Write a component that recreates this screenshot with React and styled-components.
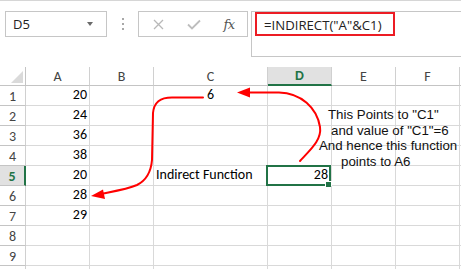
import React from "react";
import styled, { createGlobalStyle } from "styled-components";

const Global = createGlobalStyle`
  html, body { margin: 0; padding: 0; background: #fff; }
  body { width: 461px; height: 269px; overflow: hidden; }
  * { box-sizing: border-box; }
`;

const Page = styled.div`
  position: relative;
  width: 461px;
  height: 269px;
  overflow: hidden;
  background: #fff;
`;

const FormulaBar = styled.div`
  display: flex;
  align-items: flex-start;
  height: 67px;
  border-top: 1px solid #d6d6d6;
  padding-top: 10px;
  padding-left: 5px;
  width: 520px;
`;

const NameBox = styled.div`
  position: relative;
  display: flex;
  align-items: center;
  width: 102px;
  height: 26px;
  border: 1px solid #c6c6c6;
  padding-left: 7px;
  font-family: "Open Sans", "Noto Sans", sans-serif;
  font-size: 13px;
  color: #222;
`;

const DropArrow = styled.span`
  position: absolute;
  right: 13px;
  top: 10px;
  width: 0;
  height: 0;
  border-left: 3.5px solid transparent;
  border-right: 3.5px solid transparent;
  border-top: 4px solid #6a6a6a;
`;

const Separator = styled.div`
  width: 31px;
  height: 26px;
  display: flex;
  flex-direction: column;
  align-items: center;
  justify-content: center;
  gap: 3px;
`;

const Dot = styled.span`
  width: 2px;
  height: 2px;
  background: #a8a8a8;
`;

const ButtonsBox = styled.div`
  display: flex;
  align-items: center;
  width: 110px;
  height: 26px;
  border: 1px solid #c6c6c6;
`;

const BarButton = styled.span`
  width: ${(p) => p.$w}px;
  display: flex;
  justify-content: center;
  align-items: center;
`;

const Fx = styled.span`
  font-family: "DejaVu Serif", "Liberation Serif", serif;
  font-style: italic;
  font-size: 13px;
  color: #555;
  letter-spacing: -0.5px;
`;

const FormulaInput = styled.div`
  position: relative;
  margin-left: 3px;
  flex: 1;
  height: 46px;
  border: 1px solid #c6c6c6;
  font-family: "Open Sans", "Noto Sans", sans-serif;
  font-size: 13.2px;
  color: #222;
  padding: 4px 0 0 12px;
  line-height: 18px;
`;

const Highlight = styled.div`
  position: absolute;
  left: 3px;
  top: 0;
  width: 140px;
  height: 24px;
  border: 2px solid #ec1c24;
`;

const Grid = styled.div`
  display: grid;
  grid-template-columns: 26px 64px 64px 114px 64px 64px 64px 64px;
  grid-template-rows: 19px;
  grid-auto-rows: 20px;
  width: 520px;
`;

const HeaderCell = styled.div`
  position: relative;
  display: flex;
  align-items: center;
  justify-content: center;
  border-right: 1px solid ${(p) => (p.$rowSel ? "#217346" : "#d0d0d0")};
  border-bottom: 1px solid ${(p) => (p.$colSel ? "#217346" : "#c4c4c4")};
  ${(p) => (p.$rowSel ? "border-right-width: 2px;" : "")}
  ${(p) => (p.$colSel ? "border-bottom-width: 2px;" : "")}
  background: ${(p) => (p.$colSel || p.$rowSel ? "#e1e1e1" : "#fff")};
  font-family: Calibri, Carlito, Lato, sans-serif;
  font-size: 14px;
  font-weight: ${(p) => (p.$colSel || p.$rowSel ? 700 : 400)};
  color: ${(p) => (p.$colSel || p.$rowSel ? "#217346" : "#444")};
  padding-top: ${(p) => (p.$row ? 1 : 0)}px;
`;

const Corner = styled.div`
  position: relative;
  border-right: 1px solid #c4c4c4;
  border-bottom: 1px solid #c4c4c4;
`;

const CornerTriangle = styled.svg`
  position: absolute;
  right: 2px;
  bottom: 2px;
`;

const Cell = styled.div`
  position: relative;
  display: flex;
  align-items: flex-end;
  justify-content: ${(p) =>
    p.$align === "right" ? "flex-end" : p.$align === "center" ? "center" : "flex-start"};
  border-right: 1px solid #d9d9d9;
  border-bottom: 1px solid #d9d9d9;
  padding: 0 ${(p) => (p.$align === "right" ? (p.$sel ? 3 : 2) : 2)}px 1px 2px;
  font-family: Calibri, Carlito, Lato, sans-serif;
  font-size: 14px;
  line-height: 18px;
  color: #000;
  white-space: nowrap;
`;

const Selection = styled.div`
  position: absolute;
  left: -2px;
  top: -1px;
  right: 0;
  bottom: -1px;
  border: 2px solid #217346;
  pointer-events: none;
`;

const FillHandle = styled.span`
  position: absolute;
  right: -3px;
  bottom: -4px;
  width: 7px;
  height: 7px;
  background: #217346;
  border: 1px solid #fff;
`;

const Overlay = styled.svg`
  position: absolute;
  left: 0;
  top: 0;
  pointer-events: none;
`;

const Note = styled.div`
  position: absolute;
  left: 319px;
  top: 107px;
  font-family: "Liberation Sans", Arial, sans-serif;
  font-size: 13.3px;
  line-height: 15.7px;
  color: #111;
  white-space: nowrap;
`;

const NoteLine = styled.div`
  padding-left: ${(p) => p.$indent}px;
`;

const columns = ["A", "B", "C", "D", "E", "F", "G"];
const aValues = ["20", "24", "36", "38", "20", "28", "29"];

export default function App() {
  const rows = [];
  for (let r = 1; r <= 10; r++) {
    const cells = [];
    cells.push(
      <HeaderCell key={`h${r}`} $row $rowSel={r === 5}>
        {r <= 9 ? r : ""}
      </HeaderCell>
    );
    columns.forEach((c) => {
      let content = null;
      let align = "left";
      let sel = false;
      if (c === "A" && aValues[r - 1]) {
        content = aValues[r - 1];
        align = "right";
      }
      if (c === "C" && r === 1) {
        content = "6";
        align = "center";
      }
      if (c === "C" && r === 5) content = "Indirect Function";
      if (c === "D" && r === 5) {
        content = "28";
        align = "right";
        sel = true;
      }
      cells.push(
        <Cell key={`${c}${r}`} $align={align} $sel={sel}>
          {content}
          {sel && (
            <Selection>
              <FillHandle />
            </Selection>
          )}
        </Cell>
      );
    });
    rows.push(cells);
  }

  return (
    <Page>
      <Global />
      <FormulaBar>
        <NameBox>
          D5
          <DropArrow />
        </NameBox>
        <Separator>
          <Dot />
          <Dot />
          <Dot />
        </Separator>
        <ButtonsBox>
          <BarButton $w={38}>
            <svg width="11" height="11" viewBox="0 0 11 11">
              <path d="M1 1 L10 10 M10 1 L1 10" stroke="#b8b8b8" strokeWidth="1.3" fill="none" />
            </svg>
          </BarButton>
          <BarButton $w={34}>
            <svg width="14" height="11" viewBox="0 0 14 11">
              <path d="M1 5.5 L5 9.5 L13 1.5" stroke="#bdbdbd" strokeWidth="1.8" fill="none" />
            </svg>
          </BarButton>
          <BarButton $w={36}>
            <Fx>fx</Fx>
          </BarButton>
        </ButtonsBox>
        <FormulaInput>
          =INDIRECT("A"&amp;C1)
          <Highlight />
        </FormulaInput>
      </FormulaBar>
      <Grid>
        <Corner>
          <CornerTriangle width="12" height="12" viewBox="0 0 12 12">
            <polygon points="12,0 12,12 0,12" fill="#dadada" />
          </CornerTriangle>
        </Corner>
        {columns.map((c) => (
          <HeaderCell key={c} $colSel={c === "D"}>
            {c === "G" ? "" : c}
          </HeaderCell>
        ))}
        {rows}
      </Grid>
      <Note>
        <NoteLine $indent={9}>This Points to "C1"</NoteLine>
        <NoteLine $indent={12}>and value of "C1"=6</NoteLine>
        <NoteLine $indent={0}>And hence this function</NoteLine>
        <NoteLine $indent={22}>points to A6</NoteLine>
      </Note>
      <Overlay width="461" height="269" viewBox="0 0 461 269">
        <path
          d="M300,161 C310,150 322,140 320,127 C317,108 301,93 279,92.5 L248,92.5"
          stroke="#ff0000"
          strokeWidth="2"
          fill="none"
          strokeLinecap="round"
        />
        <polygon points="237,92.5 250,87.5 250,97.5" fill="#ff0000" />
        <path
          d="M203,97.5 L172,97.5 C160,97.5 154,102 153,113 L152,160 C151,172 147,180 137,185 C128,189 116,191 103,193.5"
          stroke="#ff0000"
          strokeWidth="2"
          fill="none"
          strokeLinecap="round"
        />
        <polygon points="91,196 103,189.5 105,199" fill="#ff0000" />
      </Overlay>
    </Page>
  );
}
